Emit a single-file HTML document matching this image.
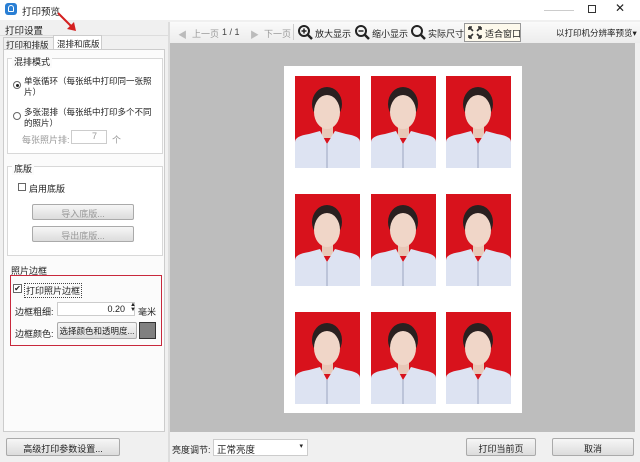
<!DOCTYPE html>
<html><head><meta charset="utf-8">
<style>
*{margin:0;padding:0;box-sizing:border-box}
body{width:640px;height:462px;overflow:hidden;background:#f0f0f0;font-family:"Liberation Sans","Noto Sans CJK SC",sans-serif;font-size:9px;color:#222;position:relative}
.a{position:absolute;white-space:nowrap}
.btn{position:absolute;border:1px solid #aaa;background:linear-gradient(#f6f6f6,#dcdcdc);border-radius:2px;text-align:center;white-space:nowrap;overflow:hidden}
.grp{position:absolute;border:1px solid #d8d8d8;background:#fff}
</style></head><body>
<!-- title bar -->
<div class="a" style="left:0;top:0;width:640px;height:20px;background:#fff"></div>
<div class="a" style="left:5px;top:3px;width:12px;height:12px;background:#2a7fd4;border-radius:3px"></div>
<div class="a" style="left:8px;top:5px;width:6px;height:7px;border:1.5px solid #fff;border-radius:3px 3px 1px 1px"></div>
<div class="a" style="left:22px;top:4px;font-size:9.5px">打印预览</div>
<div class="a" style="left:544px;top:10px;width:30px;height:1px;background:#ccc"></div>
<div class="a" style="left:588px;top:5px;width:8px;height:8px;border:1px solid #333"></div>
<div class="a" style="left:615px;top:1px;font-size:12px">✕</div>
<!-- left -->
<div class="a" style="left:5px;top:23px;font-size:9.5px">打印设置</div>
<div class="a" style="left:0;top:35px;width:168px;height:1px;background:#ddd"></div>
<div class="a" style="left:3px;top:37px;width:51px;height:13px;border:1px solid #ccc;border-bottom:none;padding:1px 2px;font-size:8.5px">打印和排版</div>
<div class="a" style="left:53px;top:35px;width:49px;height:15px;border:1px solid #ccc;border-bottom:none;background:#fff;padding:2px 3px;font-size:8.5px">混排和底版</div>
<div class="a" style="left:3px;top:49px;width:162px;height:383px;border:1px solid #ccc;background:#fbfbfb"></div>
<div class="grp" style="left:7px;top:58px;width:156px;height:96px"></div>
<div class="a" style="left:12px;top:55px;background:#fbfbfb;padding:0 2px">混排模式</div>
<div class="a" style="left:13px;top:81px;width:8px;height:8px;border:1px solid #666;border-radius:50%"></div>
<div class="a" style="left:15.5px;top:83.5px;width:3px;height:3px;background:#222;border-radius:50%"></div>
<div class="a" style="left:24px;top:76px;line-height:11px;font-size:8.5px">单张循环（每张纸中打印同一张照<br>片）</div>
<div class="a" style="left:13px;top:112px;width:8px;height:8px;border:1px solid #666;border-radius:50%"></div>
<div class="a" style="left:24px;top:107px;line-height:11px;font-size:8.5px">多张混排（每张纸中打印多个不同<br>的照片）</div>
<div class="a" style="left:22px;top:133px;color:#999">每张照片排:</div>
<div class="a" style="left:71px;top:130px;width:36px;height:14px;border:1px solid #ccc;background:#fff;text-align:right;padding-right:9px;color:#999">7</div>
<div class="a" style="left:112px;top:133px;color:#999">个</div>
<div class="grp" style="left:7px;top:166px;width:156px;height:90px"></div>
<div class="a" style="left:12px;top:162px;background:#fbfbfb;padding:0 2px">底版</div>
<div class="a" style="left:18px;top:183px;width:8px;height:8px;border:1px solid #666;background:#fff"></div>
<div class="a" style="left:29px;top:182px">启用底版</div>
<div class="btn" style="left:32px;top:204px;width:102px;height:16px;color:#999;padding-top:2px">导入底版...</div>
<div class="btn" style="left:32px;top:226px;width:102px;height:16px;color:#999;padding-top:2px">导出底版...</div>
<div class="a" style="left:11px;top:264px">照片边框</div>
<div class="a" style="left:10px;top:275px;width:152px;height:71px;border:1.5px solid #c8283c"></div>
<div class="a" style="left:13px;top:284px;width:9px;height:9px;border:1px solid #666;background:#fff;font-size:8px;line-height:7px;text-align:center">✔</div>
<div class="a" style="left:24px;top:283px;border:1px dotted #444;padding:0 1px">打印照片边框</div>
<div class="a" style="left:15px;top:305px">边框粗细:</div>
<div class="a" style="left:57px;top:302px;width:78px;height:14px;border:1px solid #ccc;background:#fff;text-align:right;padding-right:9px;padding-top:1px">0.20</div>
<div class="a" style="left:130px;top:303px;font-size:6px;line-height:5px">▲<br>▼</div>
<div class="a" style="left:138px;top:305px">毫米</div>
<div class="a" style="left:15px;top:327px">边框颜色:</div>
<div class="btn" style="left:57px;top:322px;width:80px;height:17px;padding-top:2px;font-size:8.5px">选择颜色和透明度...</div>
<div class="a" style="left:139px;top:322px;width:17px;height:17px;border:1px solid #333;background:#808080"></div>
<!-- red arrow -->
<svg class="a" style="left:55px;top:10px" width="25" height="25"><line x1="3" y1="3" x2="18" y2="18" stroke="#d42020" stroke-width="2"/><polygon points="21,21 12,19 19,12" fill="#d42020"/></svg>
<!-- toolbar -->
<div class="a" style="left:168px;top:22px;width:472px;height:21px;background:linear-gradient(#fafafa,#ececec)"></div>
<div class="a" style="left:168px;top:22px;width:2px;height:440px;background:#ddd"></div>
<div class="a" style="left:178px;top:28px;font-size:9px;color:#bbb">◀</div>
<div class="a" style="left:192px;top:27px;color:#999">上一页</div>
<div class="a" style="left:222px;top:27px;color:#444">1 / 1</div>
<div class="a" style="left:250px;top:28px;color:#bbb">▶</div>
<div class="a" style="left:264px;top:27px;color:#999">下一页</div>
<div class="a" style="left:293px;top:24px;width:1px;height:16px;background:#ccc"></div>
<svg class="a" style="left:297px;top:24px" width="16" height="16"><circle cx="7" cy="7" r="5" fill="none" stroke="#222" stroke-width="2"/><line x1="11" y1="11" x2="15" y2="15" stroke="#222" stroke-width="2.5"/><line x1="4.5" y1="7" x2="9.5" y2="7" stroke="#222" stroke-width="1.5"/><line x1="7" y1="4.5" x2="7" y2="9.5" stroke="#222" stroke-width="1.5"/></svg>
<div class="a" style="left:315px;top:27px">放大显示</div>
<svg class="a" style="left:354px;top:24px" width="16" height="16"><circle cx="7" cy="7" r="5" fill="none" stroke="#222" stroke-width="2"/><line x1="11" y1="11" x2="15" y2="15" stroke="#222" stroke-width="2.5"/><line x1="4.5" y1="7" x2="9.5" y2="7" stroke="#222" stroke-width="1.5"/></svg>
<div class="a" style="left:372px;top:27px">缩小显示</div>
<svg class="a" style="left:410px;top:24px" width="16" height="16"><circle cx="7" cy="7" r="5" fill="none" stroke="#222" stroke-width="2"/><line x1="11" y1="11" x2="15" y2="15" stroke="#222" stroke-width="2.5"/></svg>
<div class="a" style="left:428px;top:27px">实际尺寸</div>
<div class="a" style="left:464px;top:23px;width:57px;height:19px;border:1px solid #999;background:#fdf9ec"></div>
<svg class="a" style="left:467px;top:25px" width="16" height="15"><g stroke="#333" stroke-width="1.6" fill="none"><path d="M2 2l4 4M2 2h3M2 2v3M14 2l-4 4M14 2h-3M14 2v3M2 13l4-4M2 13h3M2 13v-3M14 13l-4-4M14 13h-3M14 13v-3"/></g></svg>
<div class="a" style="left:485px;top:27px">适合窗口</div>
<div class="a" style="left:556px;top:27px;font-size:8.5px">以打印机分辨率预览▾</div>
<!-- preview -->
<div class="a" style="left:170px;top:43px;width:465px;height:389px;background:#bdbdbd"></div>
<div class="a" style="left:284px;top:66px;width:238px;height:347px;background:#fff"></div>
<svg width="0" height="0" style="position:absolute"><defs>
<symbol id="p" viewBox="0 0 65 92">
<rect width="65" height="92" fill="#d8121c"/>
<ellipse cx="32" cy="28" rx="15" ry="17" fill="#2a2020"/>
<rect x="27" y="48" width="11" height="14" fill="#e8c8b8"/>
<ellipse cx="32" cy="36" rx="13" ry="17" fill="#f0d6c8"/>
<path d="M0 66 Q0 60 14 58 L25 55 L32 68 L40 55 L51 58 Q65 60 65 66 L65 92 L0 92Z" fill="#dde3f2"/>
<line x1="32" y1="68" x2="32" y2="92" stroke="#9aa6c0" stroke-width="1"/>
</symbol></defs></svg>
<svg class="a" style="left:295px;top:76px" width="65" height="92"><use href="#p"/></svg>
<svg class="a" style="left:371px;top:76px" width="65" height="92"><use href="#p"/></svg>
<svg class="a" style="left:446px;top:76px" width="65" height="92"><use href="#p"/></svg>
<svg class="a" style="left:295px;top:194px" width="65" height="92"><use href="#p"/></svg>
<svg class="a" style="left:371px;top:194px" width="65" height="92"><use href="#p"/></svg>
<svg class="a" style="left:446px;top:194px" width="65" height="92"><use href="#p"/></svg>
<svg class="a" style="left:295px;top:312px" width="65" height="92"><use href="#p"/></svg>
<svg class="a" style="left:371px;top:312px" width="65" height="92"><use href="#p"/></svg>
<svg class="a" style="left:446px;top:312px" width="65" height="92"><use href="#p"/></svg>
<!-- bottom -->
<div class="btn" style="left:6px;top:438px;width:114px;height:18px;padding-top:3px">高级打印参数设置...</div>
<div class="a" style="left:172px;top:443px">亮度调节:</div>
<div class="a" style="left:213px;top:439px;width:95px;height:17px;border:1px solid #ccc;background:#fff;padding:2px 3px;font-size:9.5px">正常亮度<span style="position:absolute;right:4px;top:2px;font-size:7px">▾</span></div>
<div class="btn" style="left:466px;top:438px;width:70px;height:18px;padding-top:3px">打印当前页</div>
<div class="btn" style="left:552px;top:438px;width:82px;height:18px;padding-top:3px">取消</div>
</body></html>
